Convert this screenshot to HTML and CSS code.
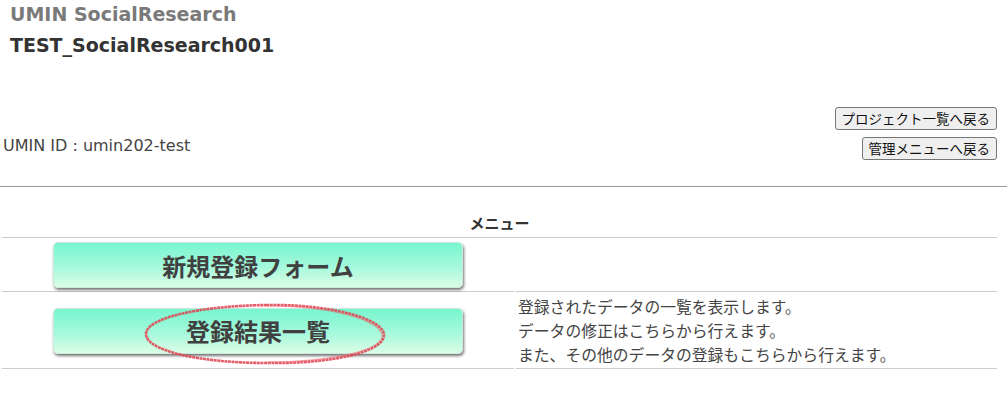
FILE: index.html
```html
<!DOCTYPE html>
<html lang="ja">
<head>
<meta charset="utf-8">
<title>UMIN SocialResearch</title>
<link rel="stylesheet" href="styles.css">
</head>
<body>
<header class="site">
  <p class="site-name">UMIN SocialResearch</p>
  <p class="project-name">TEST_SocialResearch001</p>
</header>
<div class="user-bar">
  <p class="user-id">UMIN ID : umin202-test</p>
  <div class="nav-buttons">
    <button class="nav-btn" type="button">プロジェクト一覧へ戻る</button>
    <button class="nav-btn" type="button">管理メニューへ戻る</button>
  </div>
</div>
<hr class="divider">
<div class="menu-wrap">
  <table class="menu">
    <thead>
      <tr><th colspan="2">メニュー</th></tr>
    </thead>
    <tbody>
      <tr>
        <td class="btn-cell"><button class="menu-btn" type="button">新規登録フォーム</button></td>
        <td class="desc"></td>
      </tr>
      <tr>
        <td class="btn-cell">
          <div class="marked">
            <button class="menu-btn" type="button">登録結果一覧</button>
            <svg class="circle" width="250" height="66" viewBox="0 0 250 66" aria-hidden="true">
              <path d="M125 4 C190 3 243 18 243 34 C243 51 190 63 126 62 C60 62 5 50 5 33 C5 17 58 5 125 4 Z" fill="none" stroke="#e2404e" stroke-width="2.6" stroke-opacity="0.85" stroke-dasharray="3 0.6"/>
              <path d="M120 5 C188 4 241 19 241 35 C240 50 188 61 124 61" fill="none" stroke="#ee6a74" stroke-width="1.2" stroke-opacity="0.6"/>
            </svg>
          </div>
        </td>
        <td class="desc">登録されたデータの一覧を表示します。<br>データの修正はこちらから行えます。<br>また、その他のデータの登録もこちらから行えます。</td>
      </tr>
    </tbody>
  </table>
</div>
</body>
</html>
```
FILE: styles.css
```css
html, body {
  margin: 0;
  padding: 0;
  background: #fff;
}
body {
  font-family: "DejaVu Sans", "Noto Sans CJK JP", sans-serif;
  color: #333;
}
.site {
  padding: 1px 10px 0;
}
.site-name {
  margin: 0;
  font-size: 19px;
  line-height: 27px;
  font-weight: bold;
  color: #7a7a7a;
}
.project-name {
  margin: 2px 0 0;
  font-size: 19px;
  line-height: 30px;
  font-weight: bold;
  color: #333;
}
.user-bar {
  display: flex;
  justify-content: space-between;
  align-items: flex-end;
  padding: 47px 10px 0 3px;
}
.user-id {
  margin: 0 0 2px;
  font-size: 16px;
  line-height: 24px;
  color: #444;
}
.nav-buttons {
  display: flex;
  flex-direction: column;
  align-items: flex-end;
  gap: 7px;
}
.nav-btn {
  font-family: "Noto Sans CJK JP", sans-serif;
  font-size: 13.5px;
  line-height: 17px;
  padding: 2px 6px;
  color: #111;
  background: #efefef;
  border: 1px solid #767676;
  border-radius: 3px;
}
.divider {
  margin: 26px 0 0;
  border: 0;
  border-top: 1px solid #999;
  height: 0;
}
.menu-wrap {
  padding: 19px 8px 0 0;
}
.menu {
  width: 100%;
  border-collapse: separate;
  border-spacing: 2px;
  font-family: "Noto Sans CJK JP", sans-serif;
}
.menu th {
  font-size: 15px;
  line-height: 24px;
  font-weight: bold;
  color: #333;
  padding: 3px 0 2px;
  border-bottom: 1px solid #ccc;
}
.menu td {
  border-bottom: 1px solid #ccc;
  padding: 1px 0;
  vertical-align: middle;
}
.btn-cell {
  width: 512px;
}
.menu-btn {
  display: block;
  margin: 1px auto 2px;
  width: 410px;
  height: 46px;
  font-family: "Noto Sans CJK JP", sans-serif;
  font-size: 24px;
  font-weight: bold;
  color: #404040;
  background: linear-gradient(to bottom, #78f5cf 0%, #a6f9dc 55%, #dbfde6 100%);
  border: 1px solid #c9e9dc;
  border-radius: 5px;
  box-shadow: 1px 2px 3px rgba(0, 0, 0, 0.55);
}
.marked {
  position: relative;
}
.circle {
  position: absolute;
  left: 139px;
  top: -7px;
  pointer-events: none;
}
.desc {
  padding-left: 2px !important;
  font-size: 15.8px;
  line-height: 24px;
  color: #444;
}
```
